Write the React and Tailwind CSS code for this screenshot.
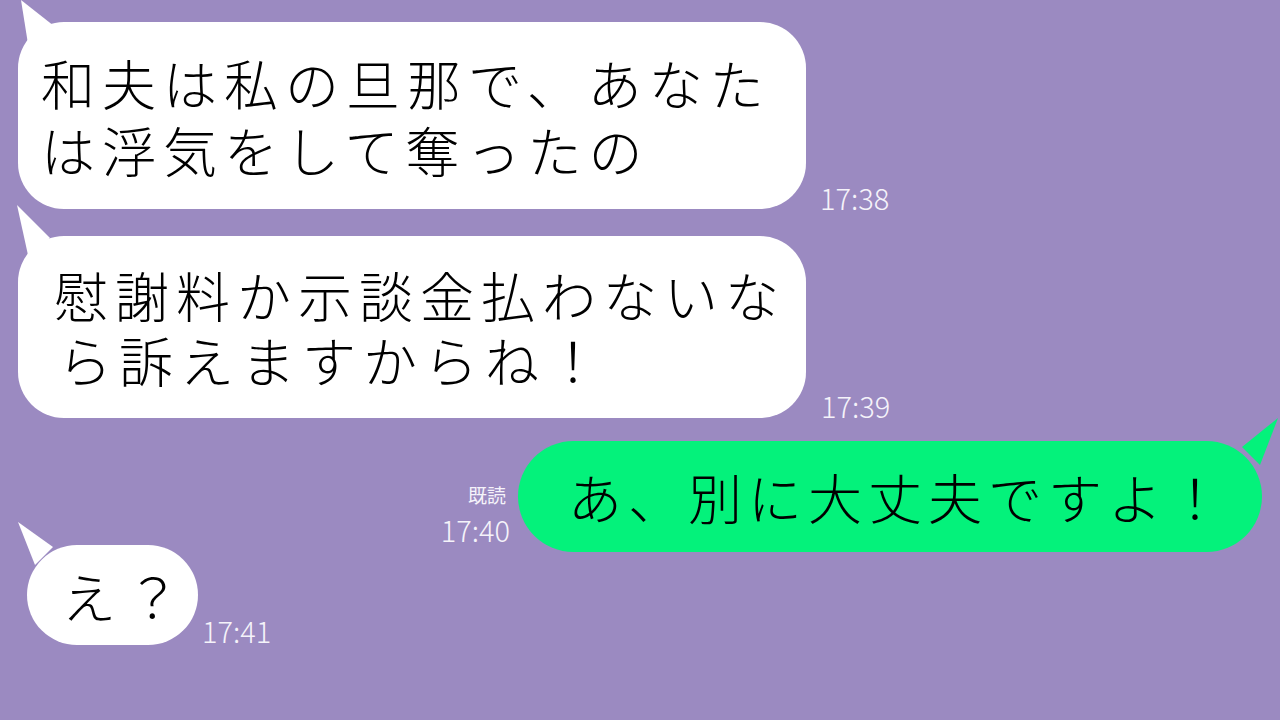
const jp = { fontFamily: '"Noto Sans CJK JP", "Noto Sans", sans-serif' };

function Time({ children, className = '' }) {
  return (
    <div className={`text-[29px] leading-none text-[#f5f3fa] font-light ${className}`} style={jp}>
      {children}
    </div>
  );
}

export default function App() {
  return (
    <div className="w-[1280px] h-[720px] bg-[#9b8ac1] overflow-hidden flex flex-col" style={jp}>
      {/* 1 */}
      <div className="flex items-end mt-[22px] ml-[18px]">
        <div className="relative w-[788px] h-[187px] bg-white rounded-[46px] flex flex-col justify-center pl-[23px] text-[54px] leading-[67px] tracking-[7px] font-light text-black">
          <svg className="absolute left-[-4px] top-[-22px]" width="60" height="50" viewBox="0 0 60 50">
            <path d="M7 0 L40 26 L14 44 Z" fill="#ffffff" />
          </svg>
          <div className="relative">和夫は私の旦那で、あなた</div>
          <div className="relative">は浮気をして奪ったの</div>
        </div>
        <Time className="ml-[14px] mb-[-3px]">17:38</Time>
      </div>

      {/* 2 */}
      <div className="flex items-end mt-[27px] ml-[18px]">
        <div className="relative w-[788px] h-[182px] bg-white rounded-[46px] flex flex-col justify-center pl-[36px] text-[54px] leading-[65px] tracking-[7px] font-light text-black">
          <svg className="absolute left-[-4px] top-[-31px]" width="60" height="50" viewBox="0 0 60 50">
            <path d="M3 0 L36 33 L14 50 Z" fill="#ffffff" />
          </svg>
          <div className="relative">慰謝料か示談金払わないな</div>
          <div className="relative pl-[4px]">ら訴えますからね！</div>
        </div>
        <Time className="ml-[15px] mb-[-2px]">17:39</Time>
      </div>

      {/* 3 */}
      <div className="flex items-end justify-end mt-[23px] mr-[18px]">
        <div className="flex flex-col items-end mr-[8px] mb-[8px]">
          <div className="text-[19px] leading-none text-[#f5f3fa] mb-[11px] mr-[4px]">既読</div>
          <Time>17:40</Time>
        </div>
        <div className="relative w-[744px] h-[111px] bg-[#04f27b] rounded-[56px] flex items-center pl-[50px] text-[54px] tracking-[6px] font-light text-black">
          <svg className="absolute right-[-18px] top-[-24px]" width="60" height="60" viewBox="0 0 60 60">
            <path d="M58 1 L22 30 L40 48 Z" fill="#04f27b" />
          </svg>
          <div className="relative">あ、別に大丈夫ですよ！</div>
        </div>
      </div>

      {/* 4 */}
      <div className="flex items-end mt-[-7px] ml-[27px]">
        <div className="relative w-[171px] h-[100px] bg-white rounded-[50px] flex items-center pl-[35px] text-[54px] tracking-[10px] font-light text-black">
          <svg className="absolute left-[-14px] top-[-24px]" width="60" height="50" viewBox="0 0 60 50">
            <path d="M5 1 L40 26 L22 44 Z" fill="#ffffff" />
          </svg>
          <div className="relative">え？</div>
        </div>
        <Time className="ml-[4px] mb-[0px]">17:41</Time>
      </div>
    </div>
  );
}
